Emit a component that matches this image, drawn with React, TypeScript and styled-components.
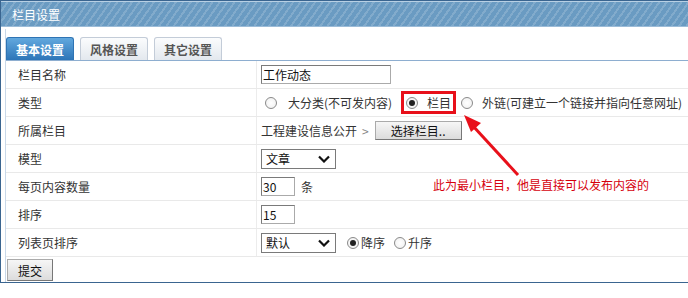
import React from "react";
import styled, { createGlobalStyle } from "styled-components";

const Global = createGlobalStyle`
  html, body { margin: 0; padding: 0; background: #fff; overflow: hidden; }
  body { font-family: "Noto Sans CJK SC", "Liberation Sans", sans-serif; font-size: 12px; color: #333; }
`;

const Panel = styled.div`
  position: relative;
  width: 700px;
  height: 283px;
  border: 1px solid #3a6590;
  border-right: none;
  box-sizing: border-box;
  display: flex;
  flex-direction: column;
`;

const Header = styled.div`
  height: 26px;
  border-top: 1px solid #b8d0e4;
  box-sizing: border-box;
  background-color: #6a9bc2;
  background-image: repeating-linear-gradient(
    -55deg,
    rgba(255, 255, 255, 0) 0px,
    rgba(255, 255, 255, 0) 4px,
    rgba(255, 255, 255, 0.16) 4px,
    rgba(255, 255, 255, 0.16) 6px
  );
  color: #fff;
  display: flex;
  align-items: center;
  padding-left: 11px;
  font-size: 12px;
  border-bottom: 1px solid #9cbcd8;
`;

const Body = styled.div`
  flex: 1;
  margin: 2px 0 0 4px;
  border-left: 1px solid #c9d8e8;
  display: flex;
  flex-direction: column;
`;

const TabBar = styled.div`
  display: flex;
  gap: 6px;
  padding-top: 8px;
  border-bottom: 1px solid #8eaed0;
`;

const Tab = styled.div<{ $active?: boolean }>`
  width: 68px;
  height: 23px;
  box-sizing: border-box;
  display: flex;
  align-items: center;
  justify-content: center;
  font-weight: bold;
  font-size: 12px;
  border-radius: 3px 3px 0 0;
  border: 1px solid ${(p) => (p.$active ? "#2f74b4" : "#c3ccd8")};
  border-bottom: none;
  color: ${(p) => (p.$active ? "#fff" : "#555")};
  background: ${(p) =>
    p.$active
      ? "linear-gradient(#62a8de, #2d75b8)"
      : "linear-gradient(#fbfcfd, #e3e8ee)"};
`;

const Row = styled.div`
  display: flex;
  height: 28px;
  box-sizing: border-box;
  border-bottom: 1px solid #e9e9e9;
`;

const Label = styled.div`
  width: 251px;
  box-sizing: border-box;
  padding-left: 12px;
  display: flex;
  align-items: center;
  border-right: 1px solid #ececec;
`;

const Value = styled.div`
  flex: 1;
  display: flex;
  align-items: center;
  padding-left: 4px;
  white-space: nowrap;
`;

const TextInput = styled.div<{ $w: number }>`
  width: ${(p) => p.$w}px;
  height: 19px;
  box-sizing: border-box;
  border: 1px solid #7a7a7a;
  border-right-color: #aaa;
  border-bottom-color: #aaa;
  display: flex;
  align-items: center;
  padding-left: 1px;
  color: #111;
  font-size: 12px;
  background: #fff;
`;

const Select = styled.div`
  width: 75px;
  height: 20px;
  box-sizing: border-box;
  border: 1px solid #7a7a7a;
  display: flex;
  align-items: center;
  justify-content: space-between;
  padding: 0 5px 0 4px;
  color: #111;
  background: #fff;
`;

const Radio = styled.span<{ $checked?: boolean }>`
  width: 12px;
  height: 12px;
  box-sizing: border-box;
  border-radius: 50%;
  border: 1px solid #8a8a8a;
  background: radial-gradient(circle, #fff, #eee);
  display: inline-flex;
  align-items: center;
  justify-content: center;
  flex: none;
  &::after {
    content: "";
    width: 6px;
    height: 6px;
    border-radius: 50%;
    background: ${(p) => (p.$checked ? "#222" : "transparent")};
  }
`;

const Choice = styled.span<{ $gap: number; $ml: number; $w?: number }>`
  display: inline-flex;
  align-items: center;
  gap: ${(p) => p.$gap}px;
  margin-left: ${(p) => p.$ml}px;
  ${(p) => (p.$w ? `width: ${p.$w}px;` : "")}
`;

const Highlight = styled.span`
  display: inline-flex;
  align-items: center;
  gap: 9px;
  height: 23px;
  box-sizing: border-box;
  border: 3px solid #e8101a;
  padding: 0 2px 0 2px;
  margin-left: 6px;
`;

const Button = styled.button<{ $w: number; $h: number }>`
  width: ${(p) => p.$w}px;
  height: ${(p) => p.$h}px;
  box-sizing: border-box;
  border: 1px solid #777;
  border-top-color: #aaa;
  border-left-color: #aaa;
  background: linear-gradient(#f6f6f6, #dcdcdc);
  font-family: "Noto Sans CJK SC", sans-serif;
  font-size: 12px;
  color: #111;
  padding: 0;
  display: inline-flex;
  align-items: center;
  justify-content: center;
`;

const Gray = styled.span`
  color: #888;
  margin: 0 6px 0 5px;
`;

const Unit = styled.span`
  margin-left: 6px;
`;

const SubmitRow = styled.div`
  padding: 2px 0 0 1px;
`;

const Note = styled.div`
  position: absolute;
  left: 432px;
  top: 175px;
  color: #d6000c;
  font-size: 12px;
  white-space: nowrap;
`;

const ArrowLayer = styled.svg`
  position: absolute;
  left: 0;
  top: 0;
  pointer-events: none;
`;

const Chevron = () => (
  <svg width="12" height="8" viewBox="0 0 12 8">
    <path d="M1 1.5 L6 6.5 L11 1.5" fill="none" stroke="#111" strokeWidth="2.2" />
  </svg>
);

export default function App() {
  return (
    <>
      <Global />
      <Panel>
        <Header>栏目设置</Header>
        <Body>
          <TabBar>
            <Tab $active>基本设置</Tab>
            <Tab>风格设置</Tab>
            <Tab>其它设置</Tab>
          </TabBar>
          <Row>
            <Label>栏目名称</Label>
            <Value>
              <TextInput $w={130}>工作动态</TextInput>
            </Value>
          </Row>
          <Row>
            <Label>类型</Label>
            <Value>
              <Choice $gap={11} $ml={4} $w={130}>
                <Radio />
                大分类(不可发内容)
              </Choice>
              <Highlight>
                <Radio $checked />
                栏目
              </Highlight>
              <Choice $gap={9} $ml={5}>
                <Radio />
                外链(可建立一个链接并指向任意网址)
              </Choice>
            </Value>
          </Row>
          <Row>
            <Label>所属栏目</Label>
            <Value>
              工程建设信息公开
              <Gray>&gt;</Gray>
              <Button $w={87} $h={19}>选择栏目..</Button>
            </Value>
          </Row>
          <Row>
            <Label>模型</Label>
            <Value>
              <Select>
                文章
                <Chevron />
              </Select>
            </Value>
          </Row>
          <Row>
            <Label>每页内容数量</Label>
            <Value>
              <TextInput $w={34}>30</TextInput>
              <Unit>条</Unit>
            </Value>
          </Row>
          <Row>
            <Label>排序</Label>
            <Value>
              <TextInput $w={34}>15</TextInput>
            </Value>
          </Row>
          <Row>
            <Label>列表页排序</Label>
            <Value>
              <Select>
                默认
                <Chevron />
              </Select>
              <Choice $gap={2} $ml={11}>
                <Radio $checked />
                降序
              </Choice>
              <Choice $gap={2} $ml={9}>
                <Radio />
                升序
              </Choice>
            </Value>
          </Row>
          <SubmitRow>
            <Button $w={46} $h={22}>提交</Button>
          </SubmitRow>
        </Body>
        <ArrowLayer width="688" height="298" viewBox="0 0 688 298">
          <line x1="517" y1="174" x2="472" y2="125" stroke="#e8101a" strokeWidth="3" />
          <polygon points="463,114 480,122 470,131" fill="#e8101a" />
        </ArrowLayer>
        <Note>此为最小栏目，他是直接可以发布内容的</Note>
      </Panel>
    </>
  );
}
